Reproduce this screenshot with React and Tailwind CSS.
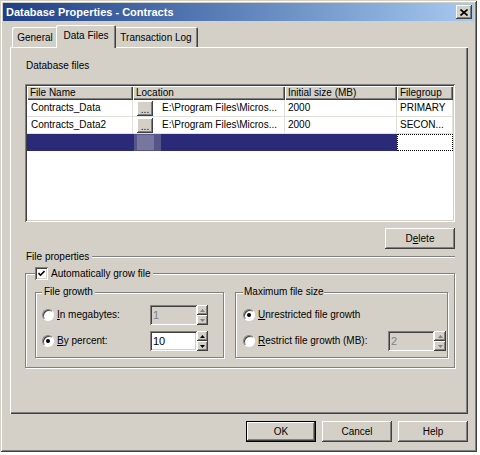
import React from 'react';

// Win2000-style bevels
const raised = 'shadow-[inset_-1px_-1px_0_#404040,inset_1px_1px_0_#ffffff,inset_-2px_-2px_0_#808080,inset_2px_2px_0_#d4d0c8]';
const sunken = 'shadow-[inset_1px_1px_0_#808080,inset_-1px_-1px_0_#ffffff,inset_2px_2px_0_#404040,inset_-2px_-2px_0_#d4d0c8]';
const etch = 'shadow-[inset_1px_1px_0_#ffffff,1px_1px_0_#ffffff]';

const Button = ({ children, className = '', isDefault = false }) => (
  <div className={`flex items-center justify-center h-[21px] bg-[#d4d0c8] ${isDefault ? 'border border-black' : ''} ${raised} ${className}`}>
    {children}
  </div>
);

const Arrow = ({ up, disabled }) => (
  <svg width="5" height="3" viewBox="0 0 5 3">
    <path d={up ? 'M2.5 0 L5 3 L0 3Z' : 'M0 0 L5 0 L2.5 3Z'} fill={disabled ? '#808080' : '#000000'} />
  </svg>
);

const Spinner = ({ disabled, className = '' }) => (
  <div className={`flex flex-col h-[20px] ${className}`}>
    <div className={`flex-1 flex items-center justify-center bg-[#d4d0c8] ${raised}`}>
      <Arrow up disabled={disabled} />
    </div>
    <div className={`flex-1 flex items-center justify-center bg-[#d4d0c8] ${raised}`}>
      <Arrow disabled={disabled} />
    </div>
  </div>
);

const TextBox = ({ value, disabled, className = '' }) => (
  <div className={`h-[20px] flex items-center pl-[3px] text-[11px] ${sunken} ${disabled ? 'bg-[#d4d0c8] text-[#808080]' : 'bg-white text-black'} ${className}`}>
    {value}
  </div>
);

const Radio = ({ checked }) => (
  <div className="w-[12px] h-[12px] shrink-0 rounded-full bg-white border border-t-[#808080] border-l-[#808080] border-r-white border-b-white shadow-[inset_1px_1px_0_#404040] flex items-center justify-center">
    {checked && <div className="w-[4px] h-[4px] rounded-full bg-black" />}
  </div>
);

const Checkbox = () => (
  <div className={`w-[13px] h-[13px] bg-white flex items-center justify-center ${sunken}`}>
    <svg width="7" height="7" viewBox="0 0 7 7">
      <path d="M0.5 3 L2.5 5.2 L6.5 1" fill="none" stroke="#000000" strokeWidth="1.6" />
    </svg>
  </div>
);

const headCell = 'h-full flex items-center pl-[3px] bg-[#d4d0c8] shadow-[inset_1px_1px_0_#ffffff,inset_-1px_-1px_0_#404040,inset_-2px_-2px_0_#808080]';
const dataCell = 'h-full flex items-center border-r border-b border-[#e2e0da]';

const files = [
  { name: 'Contracts_Data', location: 'E:\\Program Files\\Micros...', size: '2000', group: 'PRIMARY' },
  { name: 'Contracts_Data2', location: 'E:\\Program Files\\Micros...', size: '2000', group: 'SECON...' },
];

const FileGrid = () => (
  <div className={`mt-[12px] h-[138px] bg-white p-[2px] flex flex-col ${sunken}`}>
    <div className="flex h-[14px] shrink-0">
      <div className={`w-[106px] ${headCell}`}>File Name</div>
      <div className={`w-[152px] ${headCell}`}>Location</div>
      <div className={`w-[112px] ${headCell}`}>Initial size (MB)</div>
      <div className={`flex-1 ${headCell}`}>Filegroup</div>
    </div>
    {files.map((f) => (
      <div key={f.name} className="flex h-[17px] shrink-0">
        <div className={`w-[106px] pl-[4px] ${dataCell}`}>{f.name}</div>
        <div className={`w-[152px] pl-[4px] ${dataCell}`}>
          <div className={`w-[16px] h-[15px] bg-[#d4d0c8] flex items-end justify-center pb-[2px] leading-[8px] ${raised}`}>...</div>
          <span className="ml-[9px] whitespace-nowrap">{f.location}</span>
        </div>
        <div className={`w-[112px] pl-[3px] ${dataCell}`}>{f.size}</div>
        <div className={`flex-1 pl-[3px] ${dataCell}`}>{f.group}</div>
      </div>
    ))}
    <div className="flex h-[17px] shrink-0 bg-[#2a2a78]">
      <div className="w-[106px] h-full" />
      <div className="w-[152px] h-full flex items-center">
        <div className="ml-[1px] w-[27px] h-full bg-[#55558a] flex items-center">
          <div className="ml-[3px] w-[17px] h-[15px] bg-[#76769f]" />
        </div>
      </div>
      <div className="w-[112px] h-full" />
      <div className="flex-1 h-full bg-white border border-dotted border-black" />
    </div>
  </div>
);

const Tab = ({ children, className = '' }) => (
  <div className={`h-[20px] mb-[1px] pt-[1px] flex items-center justify-center bg-[#d4d0c8] rounded-t-[2px] shadow-[inset_1px_1px_0_#ffffff,inset_-1px_0_0_#404040,inset_-2px_0_0_#808080] ${className}`}>
    {children}
  </div>
);

export default function App() {
  return (
    <div className="w-[480px] h-[455px] bg-white font-['Liberation_Sans',Arial,sans-serif] text-[10px] leading-[12px] text-black">
      <div className="w-[477px] h-[452px] bg-[#d4d0c8] p-[3px] flex flex-col shadow-[inset_1px_1px_0_#d4d0c8,inset_-1px_-1px_0_#404040,inset_2px_2px_0_#ffffff,inset_-2px_-2px_0_#808080]">
        {/* title bar */}
        <div className="h-[18px] shrink-0 flex items-center justify-between pl-[3px] pr-[2px] bg-linear-to-r from-[#1f3f86] to-[#a6caf0]">
          <span className="text-white font-bold text-[11px]">Database Properties - Contracts</span>
          <div className={`w-[16px] h-[14px] bg-[#d4d0c8] flex items-center justify-center ${raised}`}>
            <svg width="8" height="7" viewBox="0 0 8 7">
              <path d="M0.5 0.5 L7.5 6.5 M7.5 0.5 L0.5 6.5" stroke="#000000" strokeWidth="1.6" />
            </svg>
          </div>
        </div>

        <div className="flex flex-col pl-[7px] pr-[6px]">
          {/* tabs */}
          <div className="flex items-end h-[23px] mt-[4px] -mb-[1px] pl-[2px]">
            <Tab className="w-[46px]">General</Tab>
            <div className="relative z-10 -mx-[2px] w-[60px] h-[23px] pb-[2px] flex items-center justify-center bg-[#d4d0c8] rounded-t-[2px] shadow-[inset_1px_1px_0_#ffffff,inset_-1px_0_0_#404040,inset_-2px_0_0_#808080]">
              Data Files
            </div>
            <Tab className="w-[84px]">Transaction Log</Tab>
          </div>

          {/* tab panel */}
          <div className="h-[367px] flex flex-col pt-[13px] pl-[15px] pr-[13px] shadow-[inset_1px_1px_0_#ffffff,inset_-1px_-1px_0_#404040,inset_-2px_-2px_0_#808080]">
            <div className="ml-[1px] h-[12px]">Database files</div>
            <FileGrid />
            <div className="mt-[6px] flex justify-end">
              <Button className="w-[70px]">D<span className="underline">e</span>lete</Button>
            </div>
            <div className="mt-[2px] h-[12px] flex items-center gap-[3px] ml-[1px]">
              <span>File properties</span>
              <div className="flex-1 h-[2px] border-t border-[#808080] border-b border-b-white" />
            </div>

            <fieldset className={`mt-[4px] h-[101px] border border-[#808080] pl-[9px] pr-[6px] pt-[6px] pb-[8px] ${etch}`}>
              <legend className="flex items-center pr-[3px] bg-[#d4d0c8]">
                <Checkbox />
                <span className="ml-[3px]">Automatically grow file</span>
              </legend>
              <div className="flex gap-[11px]">
                <fieldset className={`w-[189px] h-[72px] border border-[#808080] pl-[6px] pt-[7px] flex flex-col gap-[6px] ${etch}`}>
                  <legend className="px-[2px] bg-[#d4d0c8]">File growth</legend>
                  <div className="flex items-center h-[20px]">
                    <div className="w-[108px] flex items-center gap-[3px]">
                      <Radio />
                      <span><span className="underline">I</span>n megabytes:</span>
                    </div>
                    <TextBox value="1" disabled className="w-[47px]" />
                    <Spinner disabled className="w-[11px]" />
                  </div>
                  <div className="flex items-center h-[20px]">
                    <div className="w-[108px] flex items-center gap-[3px]">
                      <Radio checked />
                      <span><span className="underline">B</span>y percent:</span>
                    </div>
                    <TextBox value="10" className="w-[47px]" />
                    <Spinner className="w-[11px]" />
                  </div>
                </fieldset>

                <fieldset className={`w-[213px] h-[72px] border border-[#808080] pl-[7px] pt-[7px] flex flex-col gap-[6px] ${etch}`}>
                  <legend className="px-[1px] bg-[#d4d0c8]">Maximum file size</legend>
                  <div className="flex items-center h-[20px]">
                    <div className="flex items-center gap-[3px]">
                      <Radio checked />
                      <span><span className="underline">U</span>nrestricted file growth</span>
                    </div>
                  </div>
                  <div className="flex items-center h-[20px]">
                    <div className="w-[145px] flex items-center gap-[3px]">
                      <Radio />
                      <span><span className="underline">R</span>estrict file growth (MB):</span>
                    </div>
                    <TextBox value="2" disabled className="w-[46px]" />
                    <Spinner disabled className="w-[12px]" />
                  </div>
                </fieldset>
              </div>
            </fieldset>
          </div>

          {/* dialog buttons */}
          <div className="flex justify-end gap-[6px] mt-[7px]">
            <Button isDefault className="w-[70px]">OK</Button>
            <Button className="w-[70px]">Cancel</Button>
            <Button className="w-[70px]">Help</Button>
          </div>
        </div>
      </div>
    </div>
  );
}
